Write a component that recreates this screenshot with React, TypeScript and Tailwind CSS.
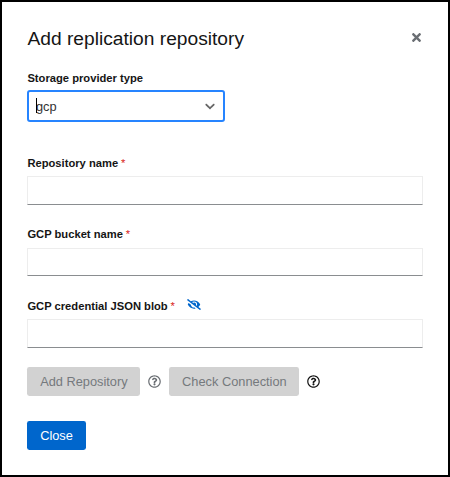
import { FaEyeSlash, FaRegQuestionCircle, FaTimes } from 'react-icons/fa';

type FieldProps = { label: string; secret?: boolean; className?: string; inputClass?: string };

function Field({ label, secret = false, className = '', inputClass = 'mt-[4px] h-[29px]' }: FieldProps) {
  return (
    <div className={className}>
      <label className="flex h-[17px] items-center pl-[0.4px] text-[11.2px] leading-[17px] font-bold">
        {label}
        <span className="ml-[2.9px] font-normal text-[#d9251b]">*</span>
        {secret && <FaEyeSlash className="relative -top-[2px] ml-[11.6px] h-[11px] w-[14px] text-[#0066cc]" />}
      </label>
      <input
        type="text"
        aria-label={label}
        className={`${inputClass} block w-full border border-[#ededed] border-b-[#8a8d90] bg-white px-2 outline-none`}
      />
    </div>
  );
}

export default function App() {
  return (
    <div className="h-[477px] w-[450px] border-2 border-black bg-white pt-[25px] pr-[25px] pl-[25px] font-['Liberation_Sans',Arial,sans-serif] text-[#151515]">
      <header className="flex h-[24px] items-center justify-between">
        <h1 className="pl-[0.5px] text-[19.2px] leading-[24px]">Add replication repository</h1>
        <button aria-label="Close dialog" className="mr-[-0.5px] flex w-[14px] justify-center text-[#6a6e73]">
          <FaTimes className="relative -top-[2px] size-[13px]" />
        </button>
      </header>

      <div className="mt-[19px]">
        <div className="h-[17px] pl-[0.4px] text-[11.2px] leading-[17px] font-bold">Storage provider type</div>
        <div className="mt-[3px] flex h-[32px] w-[198px] items-center justify-between rounded-[3px] border-2 border-[#2684ff] pr-[5px] pl-[7px]">
          <div className="flex items-center text-[12.8px] text-[#333333]">
            <span className="relative -top-px mr-[-1px] h-[15px] w-px bg-black" />
            <span className="pt-[2px] leading-[16px]">gcp</span>
          </div>
          <svg viewBox="0 0 20 20" className="size-[16px] fill-[#666666]">
            <path d="M4.516 7.548c0.436-0.446 1.043-0.481 1.576 0l3.908 3.747 3.908-3.747c0.533-0.481 1.141-0.446 1.574 0 0.436 0.445 0.408 1.197 0 1.615-0.406 0.418-4.695 4.502-4.695 4.502-0.217 0.223-0.502 0.335-0.787 0.335s-0.57-0.112-0.789-0.335c0 0-4.287-4.084-4.695-4.502s-0.436-1.17 0-1.615z" />
          </svg>
        </div>
      </div>

      <Field label="Repository name" className="mt-[33px]" />
      <Field label="GCP bucket name" className="mt-[21px]" inputClass="mt-[5px] h-[28px]" />
      <Field label="GCP credential JSON blob" secret className="mt-[22px]" />

      <div className="mt-[19px] flex h-[29px] items-center text-[12.8px]">
        <button className="h-[29px] w-[113px] rounded-[2.4px] bg-[#d2d2d2] pl-[0.8px] text-[#75797d]">Add Repository</button>
        <FaRegQuestionCircle className="ml-[8px] size-[13px] text-[#6a6e73]" />
        <button className="ml-[8px] h-[29px] w-[130px] rounded-[2.4px] bg-[#d2d2d2] pl-[0.8px] text-[#75797d]">Check Connection</button>
        <FaRegQuestionCircle className="ml-[8px] size-[13px]" />
      </div>

      <button className="mt-[25px] block h-[29px] w-[59px] rounded-[2.4px] bg-[#0066cc] text-[12.8px] text-white">Close</button>
    </div>
  );
}
